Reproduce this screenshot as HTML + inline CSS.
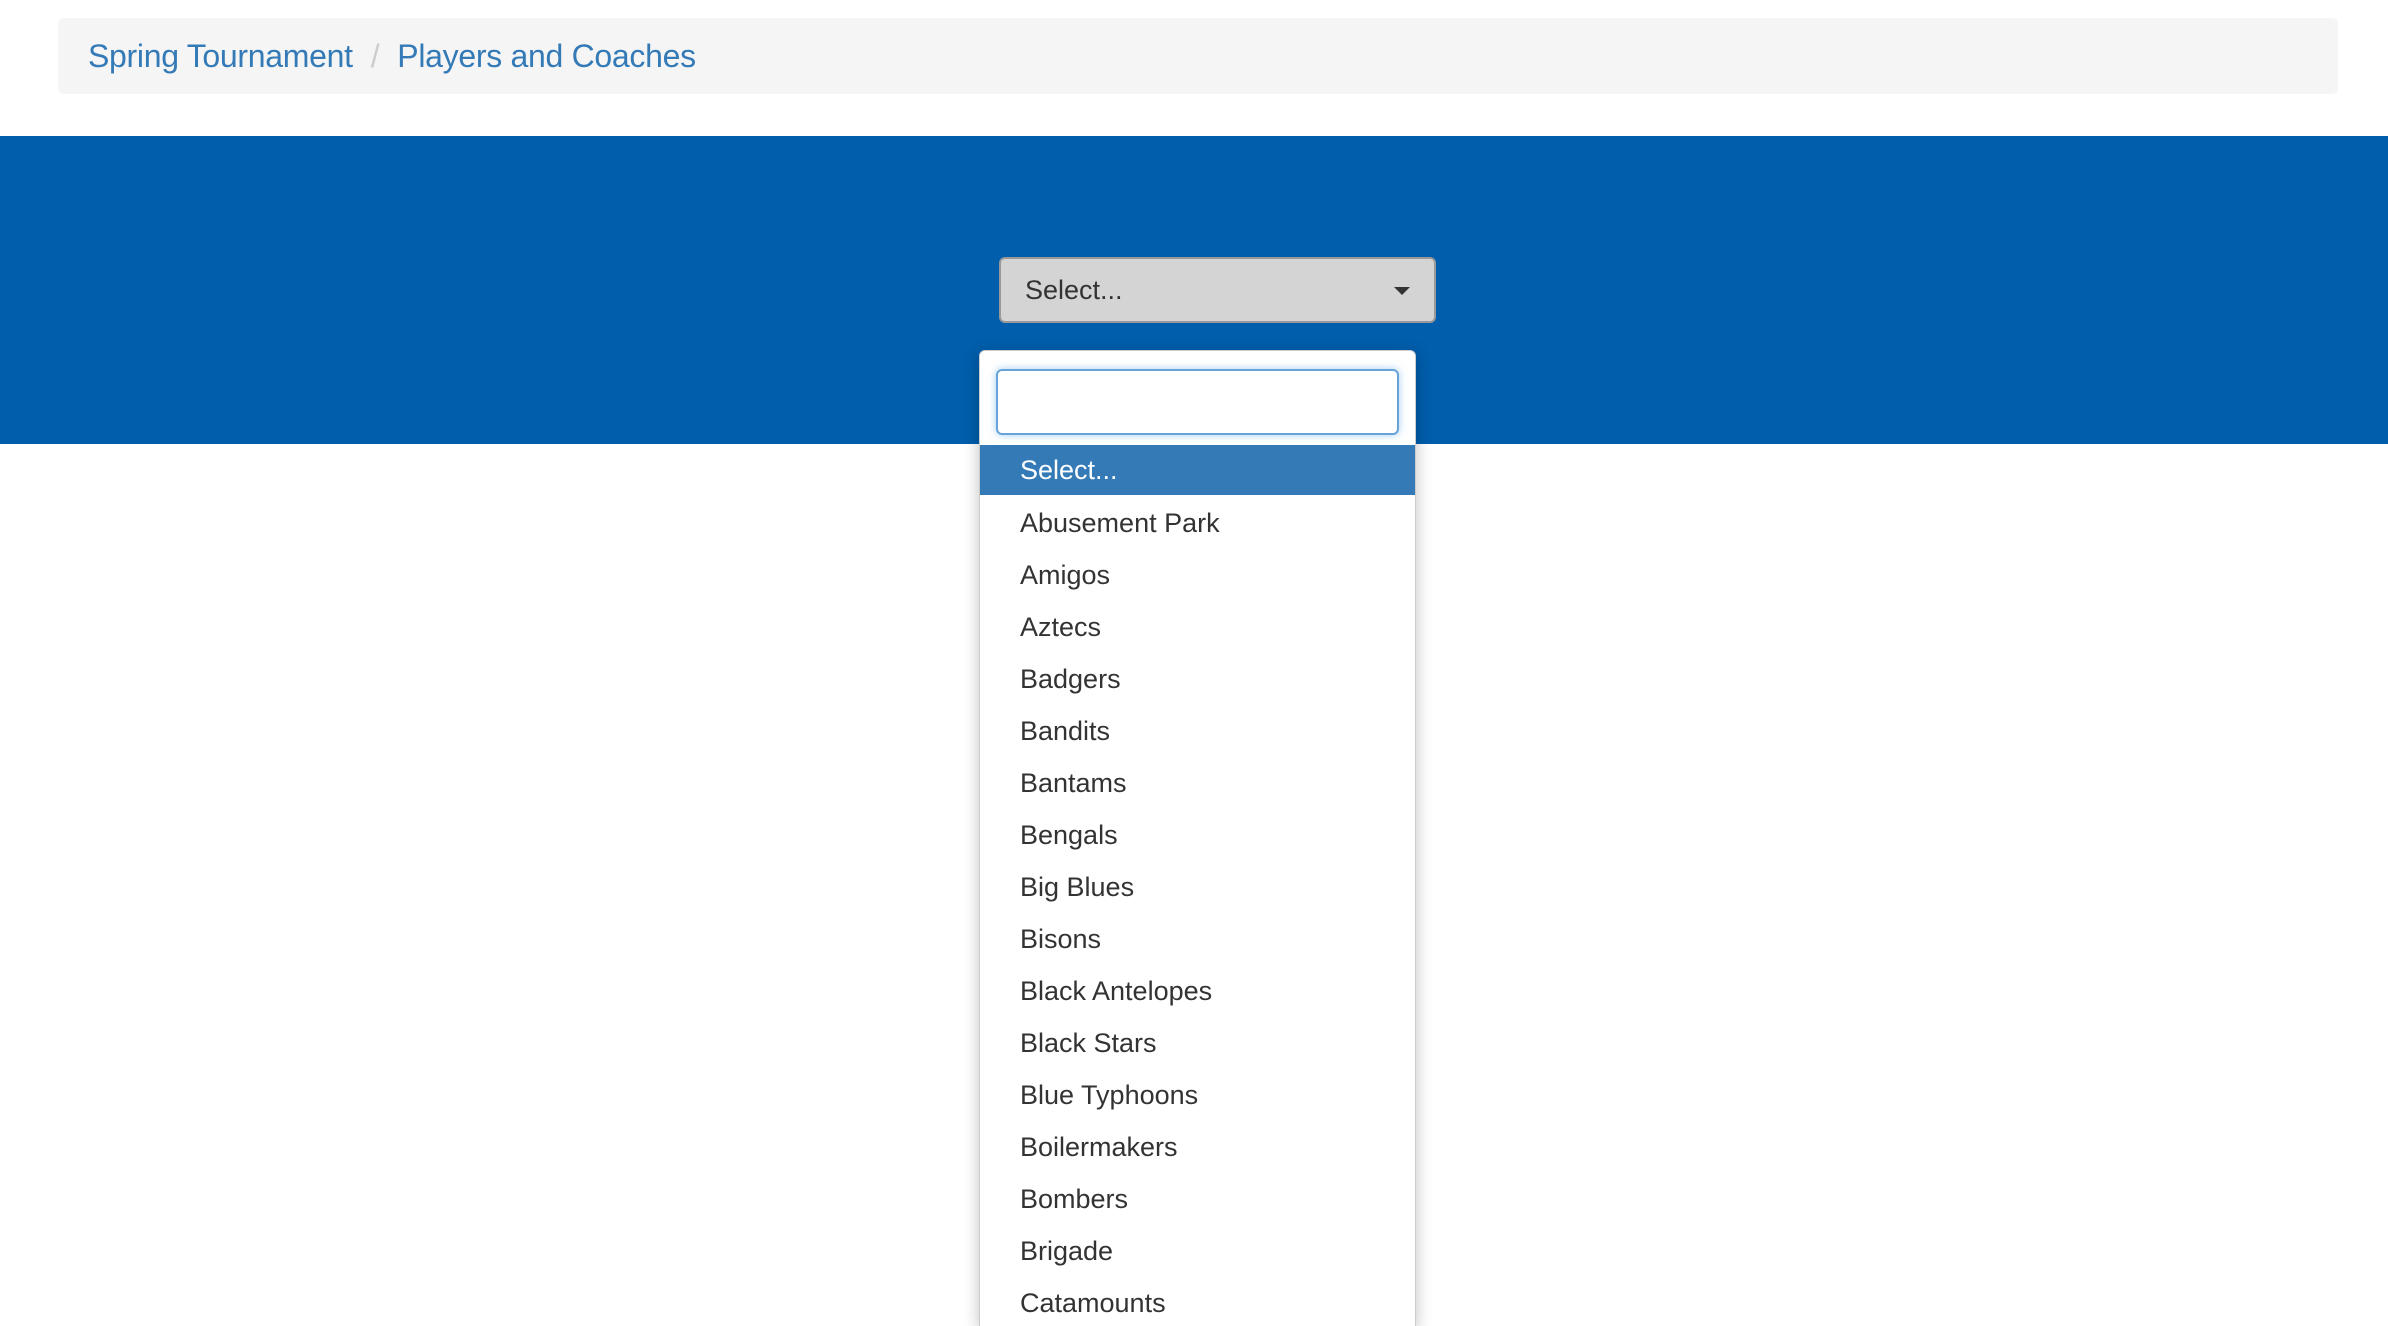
<!DOCTYPE html>
<html style="overflow:hidden;height:1326px"><head><meta charset="utf-8"><style>
*{box-sizing:border-box;margin:0;padding:0}
html,body{width:2388px;height:1326px;overflow:hidden}
body{background:#fff;font-family:"Liberation Sans",sans-serif;position:relative}
.bc{position:absolute;left:58px;top:18px;width:2280px;height:76px;background:#f5f5f5;border-radius:6px;font-size:32px;line-height:76px;padding-left:30px;color:#337ab7;letter-spacing:-0.3px}
.bc .sep{color:#ccc;margin:0 18px}
.band{position:absolute;left:0;top:136px;width:2388px;height:308px;background:#005eac}
.btn{position:absolute;left:999px;top:257px;width:437px;height:66px;background:#d4d4d4;border:2px solid #999;border-radius:6px;font-size:27px;line-height:62px;padding-left:24px;color:#333}
.btn .car{position:absolute;right:24px;top:28px;width:0;height:0;border-left:8px solid transparent;border-right:8px solid transparent;border-top:8px solid #333}
.dd{position:absolute;left:979px;top:350px;width:437px;height:976px;background:#fff;border-radius:6px 6px 0 0;box-shadow:0 4px 16px rgba(0,0,0,.25);border:1px solid #ccc;border-bottom:none;overflow:hidden}
.inp{position:absolute;left:16px;top:18px;width:403px;height:66px;border:2px solid #66a3d9;border-radius:6px;box-shadow:0 0 8px rgba(102,175,233,.6)}
.list{position:absolute;left:0;top:94px;width:100%}
.list div{height:52px;line-height:52px;padding-left:40px;font-size:27px;color:#333}
.list div.on{background:#337ab7;color:#fff;height:50px;line-height:50px;margin-bottom:2px}
</style></head><body>
<div class="bc">Spring Tournament<span class="sep">/</span>Players and Coaches</div>
<div class="band"></div>
<div class="btn">Select...<span class="car"></span></div>
<div class="dd">
<div class="inp"></div>
<div class="list">
<div class="on">Select...</div>
<div>Abusement Park</div>
<div>Amigos</div>
<div>Aztecs</div>
<div>Badgers</div>
<div>Bandits</div>
<div>Bantams</div>
<div>Bengals</div>
<div>Big Blues</div>
<div>Bisons</div>
<div>Black Antelopes</div>
<div>Black Stars</div>
<div>Blue Typhoons</div>
<div>Boilermakers</div>
<div>Bombers</div>
<div>Brigade</div>
<div>Catamounts</div>
<div>Cavaliers</div>
</div>
</div>
</body></html>
